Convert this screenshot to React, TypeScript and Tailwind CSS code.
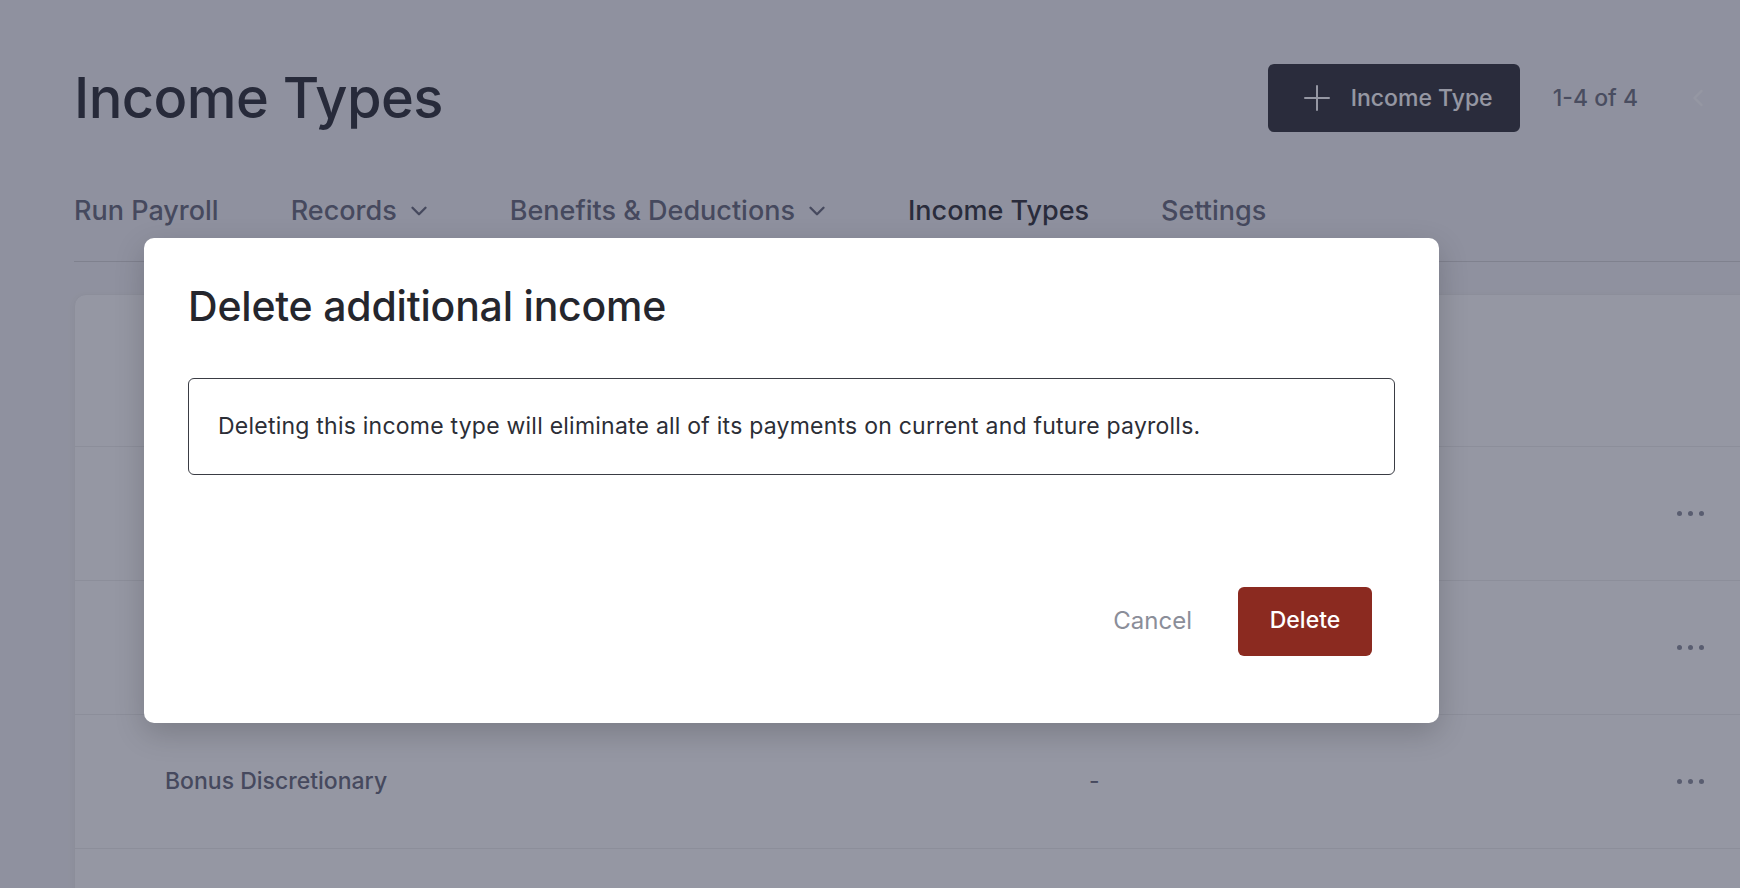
import React from 'react';
import { ChevronDown, ChevronLeft, ChevronRight } from 'lucide-react';

type IncomeRow = {
  name: string;
  description: string;
};

const rows: IncomeRow[] = [
  { name: 'Bonus Nondiscretionary', description: '-' },
  { name: 'Commission', description: '-' },
  { name: 'Bonus Discretionary', description: '-' },
];

const tabs = [
  { label: 'Run Payroll', dropdown: false, active: false },
  { label: 'Records', dropdown: true, active: false },
  { label: 'Benefits & Deductions', dropdown: true, active: false },
  { label: 'Income Types', dropdown: false, active: true },
  { label: 'Settings', dropdown: false, active: false },
];

const PlusIcon: React.FC = () => (
  <svg width="26" height="26" viewBox="0 0 26 26" fill="none">
    <path d="M13 1v24M1 13h24" stroke="currentColor" strokeWidth="2" strokeLinecap="round" />
  </svg>
);

const MoreDots: React.FC = () => (
  <div className="flex items-center gap-[6px]">
    <span className="h-[5px] w-[5px] rounded-full bg-[#9396a3]" />
    <span className="h-[5px] w-[5px] rounded-full bg-[#9396a3]" />
    <span className="h-[5px] w-[5px] rounded-full bg-[#9396a3]" />
  </div>
);

const DeleteIncomeModal: React.FC = () => (
  <div className="absolute left-[144px] top-[238px] flex h-[485px] w-[1295px] flex-col rounded-[10px] bg-white px-[44px] pt-[44px] shadow-[0_10px_30px_rgba(0,0,0,0.18)]">
    <h2 className="text-[41px] font-medium leading-[48px] tracking-[-0.005em] text-[#25262d]">
      Delete additional income
    </h2>
    <div className="mt-[48px] flex h-[97px] items-center rounded-[6px] border border-[#3a3c44] px-[29px] text-[23px] tracking-[0.01em] text-[#2c2e36]">
      Deleting this income type will eliminate all of its payments on current and future payrolls.
    </div>
    <div className="mr-[23px] mt-[112px] flex items-center justify-end gap-[22px]">
      <button className="px-[24px] pb-[2px] text-[24px] text-[#8b8e99]">Cancel</button>
      <button className="h-[69px] w-[134px] rounded-[6px] bg-[#8b2a20] pb-[2px] text-[23px] font-medium text-white">
        Delete
      </button>
    </div>
  </div>
);

export default function App() {
  return (
    <div
      className="relative h-[888px] w-full overflow-hidden bg-[#f5f5f7]"
      style={{ fontFamily: 'Inter, "Noto Sans", sans-serif' }}
    >
      <div className="w-[1850px] px-[74px]">
        {/* Page header */}
        <div className="flex items-center pt-[64px]">
          <h1 className="text-[56px] font-medium leading-[68px] tracking-[-0.01em] text-[#383a40]">
            Income Types
          </h1>
          <div className="ml-auto flex items-center">
            <button className="flex h-[68px] w-[252px] items-center gap-[21px] rounded-[6px] bg-[#3c3d44] pl-[36px] text-[23px] font-medium text-white">
              <PlusIcon />
              Income Type
            </button>
            <span className="ml-[33px] text-[23px] font-medium text-[#767986]">1-4 of 4</span>
            <ChevronLeft size={28} strokeWidth={2} className="ml-[46px] text-[#ffffff]" />
            <ChevronRight size={28} strokeWidth={2} className="ml-[36px] text-[#767986]" />
          </div>
        </div>

        {/* Section tabs */}
        <nav className="mt-[63px] flex items-center gap-[72px] border-b border-[#d8d8d9] pb-[34px]">
          {tabs.map((tab) => (
            <div
              key={tab.label}
              className={`flex items-center gap-[6px] text-[27px] font-medium leading-[32px] ${
                tab.active ? 'text-[#3c3d44]' : 'text-[#6f7282]'
              }`}
            >
              {tab.label}
              {tab.dropdown && <ChevronDown size={26} strokeWidth={2.2} className="ml-[3px] mr-[6px]" />}
            </div>
          ))}
        </nav>

        {/* Income types table */}
        <div className="mt-[32px] rounded-[12px] border border-[#eeeeef] bg-white pb-[80px] shadow-[0_2px_8px_rgba(0,0,0,0.05)]">
          <div className="flex h-[151px] items-center pl-[90px] pr-[71px] text-[20px] font-medium text-[#8b8e99]">
            <span className="w-[924px]">Name</span>
            <span>Description</span>
          </div>
          {rows.map((row) => (
            <div
              key={row.name}
              className="flex h-[134px] items-center border-t border-[#eeeeef] pl-[90px] pr-[71px]"
            >
              <span className="w-[924px] text-[23px] font-medium text-[#6f7282]">{row.name}</span>
              <span className="flex-1 text-[23px] text-[#6f7282]">{row.description}</span>
              <MoreDots />
            </div>
          ))}
          <div className="border-t border-[#eeeeef]" />
        </div>
      </div>

      {/* Dimmed backdrop */}
      <div className="absolute inset-0 bg-[rgba(20,25,50,0.45)]" />

      <DeleteIncomeModal />
    </div>
  );
}
